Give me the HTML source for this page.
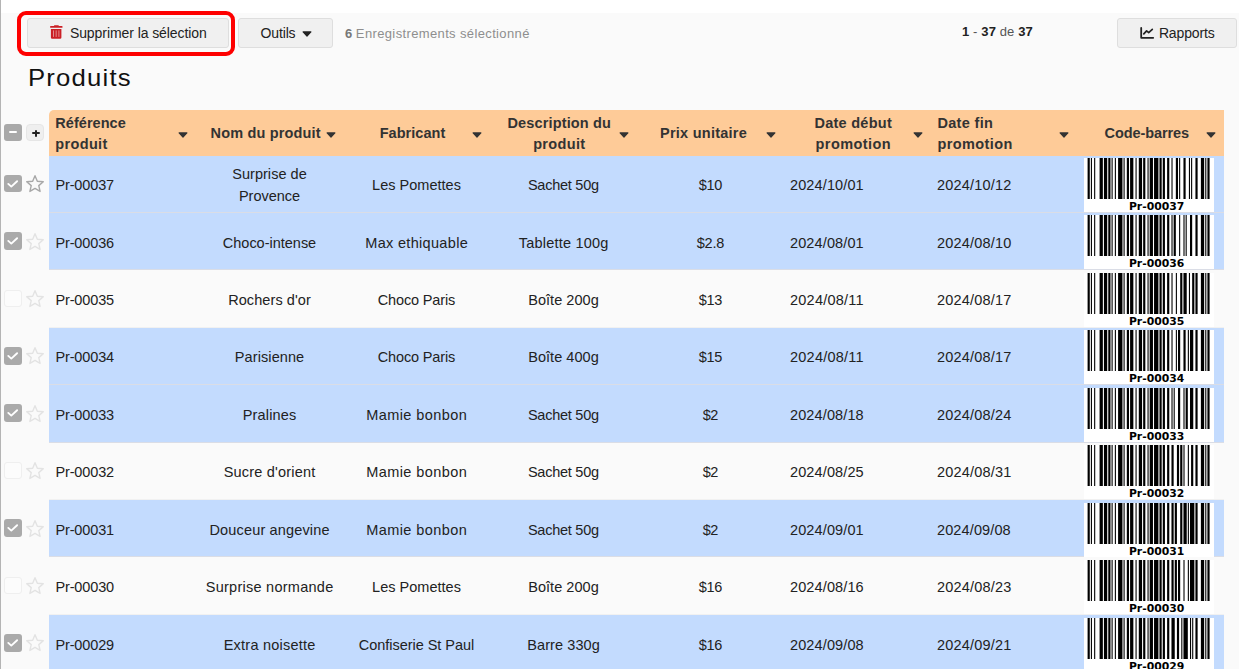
<!DOCTYPE html>
<html lang="fr"><head><meta charset="utf-8"><title>Produits</title>
<style>
*{box-sizing:border-box;margin:0;padding:0}
html,body{width:1239px;height:669px;overflow:hidden}
body{position:relative;background:#fafafa;font-family:"Liberation Sans",sans-serif;font-size:14px;color:#1a1a1a}
.abs{position:absolute}
#topwhite{position:absolute;left:0;top:0;width:1239px;height:13px;background:#fff}
#leftline{position:absolute;left:0;top:0;width:1px;height:669px;background:#b4b4b4}
#redbox{position:absolute;left:17px;top:11px;width:218px;height:45px;border:4px solid #fe0000;border-radius:9px}
.btn{position:absolute;top:18px;height:29.5px;background:#f0f0f0;border:1px solid #dedede;border-radius:3px;color:#222;font-size:14px;line-height:29px;white-space:nowrap}
.btn span{position:absolute;top:0}
#title{position:absolute;left:28px;top:60.3px;font-size:24px;line-height:36px;color:#111;white-space:nowrap}
#selinfo{position:absolute;left:345px;top:24px;font-size:13px;line-height:20px;color:#8e8e8e;white-space:nowrap}
#selinfo b{color:#777}
#pager{position:absolute;left:962px;top:22px;font-size:13px;line-height:20px;color:#555;white-space:nowrap;letter-spacing:.12px}
#pager b{color:#222}
#hdr{position:absolute;left:49px;top:110.3px;width:1175px;height:46.2px;background:#fecb98;border-top-left-radius:5px}
.h{position:absolute;font-weight:bold;font-size:14.5px;line-height:21.2px;color:#333;white-space:nowrap}
.h.ctr{text-align:center;transform:translateX(-50%)}
.car{position:absolute;top:131.6px}
.sq{position:absolute;top:123.8px;width:17.5px;height:17.5px;border-radius:3px}
.row{position:absolute;left:0;width:1239px;height:57.4px}
.row .cells{position:absolute;left:49px;top:0;width:1175px;height:57.4px}
.ln{position:absolute;left:0;top:56.5px;width:1175px;height:1px;background:#f1f1f1}
.row.sel .cells{background:#c3dbfe}
.row.sel .ln{background:#dadde6}
.cb{position:absolute;left:4.3px;top:19.4px;width:17.6px;height:17.6px;border-radius:3px;border:1px solid #efefef;background:#fcfcfc}
.cb.on{background:#aaa;border:none}
.cb svg{position:absolute;left:0;top:0}
.star{position:absolute;left:24.55px;top:18.7px;color:#e3e3e3}
.star.first{color:#a8a8a8}
.tx{position:absolute;left:49px;width:1175px;height:56px}
.c{position:absolute;top:0;height:56px;display:flex;align-items:center;font-size:14.5px;line-height:22px;white-space:nowrap;color:#222}
.c1{left:6.4px}
.c2{left:147px;width:147px;justify-content:center;text-align:center}
.c3{left:294px;width:147px;justify-content:center}
.c4{left:441px;width:147px;justify-content:center}
.c5{left:588px;width:147px;justify-content:center}
.c6{left:741px}
.c7{left:888px}
.bc{position:absolute;left:1035px;top:2.4px}
#title>span{display:inline-block;transform:scaleX(1.07);transform-origin:0 50%}
</style></head>
<body>
<div id="topwhite"></div>
<div id="leftline"></div>
<div id="redbox"></div>
<div class="btn" style="left:27px;width:201.6px">
<svg class="abs" style="left:22px;top:6px" width="13" height="14" viewBox="0 0 13 14"><path d="M4.4.2h4l.7 1h-5.400z" fill="#cb2026"/><rect x=".1" y="1.100" width="12.400" height="1.600" rx=".5" fill="#cb2026"/><path d="M.9 4h10.500v8.500a1.300 1.300 0 0 1-1.300 1.300H2.200a1.300 1.300 0 0 1-1.300-1.300z" fill="#cb2026"/><path d="M3.500 5.400v6.500M6.150 5.400v6.500M8.900 5.400v6.500" stroke="#e18c8c" stroke-width="1"/></svg>
<span style="left:41.900px"><span style="letter-spacing:-0.073px;margin-right:0.073px">Supprimer la sélection</span></span></div>
<div class="btn" style="left:238px;width:94.5px"><span style="left:21.5px"><span style="letter-spacing:-0.137px;margin-right:0.137px">Outils</span></span><svg class="car" style="left:62.500px;top:12px" width="10" height="6" viewBox="0 0 10 6"><path d="M1.100 .9h7.800L5 5z" fill="#222" stroke="#222" stroke-width="1.200" stroke-linejoin="round"/></svg></div>
<div id="selinfo"><b>6</b> <span style="letter-spacing:0.365px;margin-right:-0.365px">Enregistrements sélectionné</span></div>
<div id="pager"><b>1</b> - <b>37</b> de <b>37</b></div>
<div class="btn" style="left:1116.9px;width:120px">
<svg class="abs" style="left:22px;top:8px" width="15" height="13" viewBox="0 0 15 13"><path d="M1.200 .9v9.900h12" fill="none" stroke="#222" stroke-width="1.800" stroke-linecap="round" stroke-linejoin="round"/><path d="M3.800 6.900l2.800-3 2.100 1.700 3.600-3.300" fill="none" stroke="#222" stroke-width="1.700" stroke-linecap="round" stroke-linejoin="round"/></svg>
<span style="left:41px"><span style="letter-spacing:-0.144px;margin-right:0.144px">Rapports</span></span></div>
<div id="title"><span style="letter-spacing:1.13px;margin-right:-1.13px">Produits</span></div>
<div id="hdr"></div>
<div class="sq" style="left:4.3px;background:#a9a9a9"><i class="abs" style="left:5.100px;top:7.700px;width:7.600px;height:1.500px;background:#fff;border-radius:1px"></i></div>
<div class="sq" style="left:26.2px;background:#efefef;border:1px solid #e6e6e6;border-radius:4px"><i class="abs" style="left:4.700px;top:7.600px;width:8.100px;height:1.500px;background:#222;border-radius:1px"></i><i class="abs" style="left:8px;top:5px;width:1.500px;height:6.900px;background:#222;border-radius:1px"></i></div>
<div class="h" style="left:55.300px;top:112.9px"><span style="letter-spacing:0.043px;margin-right:-0.043px">Référence</span><br><span style="letter-spacing:0.35px;margin-right:-0.35px">produit</span></div><svg class="car" style="left:177.500px" width="10" height="6" viewBox="0 0 10 6"><path d="M1.100 .9h7.800L5 5z" fill="#333" stroke="#333" stroke-width="1.200" stroke-linejoin="round"/></svg>
<div class="h ctr" style="left:265.600px;top:122.5px"><span style="letter-spacing:0.17px;margin-right:-0.17px">Nom du produit</span></div><svg class="car" style="left:325.500px" width="10" height="6" viewBox="0 0 10 6"><path d="M1.100 .9h7.800L5 5z" fill="#333" stroke="#333" stroke-width="1.200" stroke-linejoin="round"/></svg>
<div class="h ctr" style="left:412.500px;top:122.5px"><span style="letter-spacing:0.058px;margin-right:-0.058px">Fabricant</span></div><svg class="car" style="left:472.200px" width="10" height="6" viewBox="0 0 10 6"><path d="M1.100 .9h7.800L5 5z" fill="#333" stroke="#333" stroke-width="1.200" stroke-linejoin="round"/></svg>
<div class="h ctr" style="left:559.200px;top:112.9px"><span style="letter-spacing:0.142px;margin-right:-0.142px">Description du</span><br><span style="letter-spacing:0.35px;margin-right:-0.35px">produit</span></div><svg class="car" style="left:619.400px" width="10" height="6" viewBox="0 0 10 6"><path d="M1.100 .9h7.800L5 5z" fill="#333" stroke="#333" stroke-width="1.200" stroke-linejoin="round"/></svg>
<div class="h ctr" style="left:703.400px;top:122.5px"><span style="letter-spacing:0.255px;margin-right:-0.255px">Prix unitaire</span></div><svg class="car" style="left:765.900px" width="10" height="6" viewBox="0 0 10 6"><path d="M1.100 .9h7.800L5 5z" fill="#333" stroke="#333" stroke-width="1.200" stroke-linejoin="round"/></svg>
<div class="h ctr" style="left:853.100px;top:112.9px"><span style="letter-spacing:0.267px;margin-right:-0.267px">Date début</span><br><span style="letter-spacing:0.41px;margin-right:-0.41px">promotion</span></div><svg class="car" style="left:912.700px" width="10" height="6" viewBox="0 0 10 6"><path d="M1.100 .9h7.800L5 5z" fill="#333" stroke="#333" stroke-width="1.200" stroke-linejoin="round"/></svg>
<div class="h" style="left:937.400px;top:112.9px"><span style="letter-spacing:0.341px;margin-right:-0.341px">Date fin</span><br><span style="letter-spacing:0.41px;margin-right:-0.41px">promotion</span></div><svg class="car" style="left:1059px" width="10" height="6" viewBox="0 0 10 6"><path d="M1.100 .9h7.800L5 5z" fill="#333" stroke="#333" stroke-width="1.200" stroke-linejoin="round"/></svg>
<div class="h ctr" style="left:1146.800px;top:122.5px"><span style="letter-spacing:-0.105px;margin-right:0.105px">Code-barres</span></div><svg class="car" style="left:1206.200px" width="10" height="6" viewBox="0 0 10 6"><path d="M1.100 .9h7.800L5 5z" fill="#333" stroke="#333" stroke-width="1.200" stroke-linejoin="round"/></svg>
<div class="row sel" style="top:155.5px"><span class="cb on"><svg viewBox="0 0 17.600 17.600" width="17.600" height="17.600"><path d="M4.300 8.900l3 2.700 5.800-5.400" fill="none" stroke="#fff" stroke-width="1.900" stroke-linecap="round" stroke-linejoin="round"/></svg></span><svg class="star first" viewBox="0 0 20 20" width="20" height="20"><path d="M10.00 1.70L12.32 7.20L18.27 7.71L13.76 11.62L15.11 17.44L10.00 14.35L4.89 17.44L6.24 11.62L1.73 7.71L7.68 7.20z" fill="none" stroke="currentColor" stroke-width="1.400" stroke-linejoin="round"/></svg><div class="cells" style="height:58px"><i class="ln"></i><svg class="bc" style="top:2.30px" width="130" height="54" viewBox="0 0 130 54"><rect width="130" height="54" fill="#fff"/><g transform="translate(3.6 0) scale(1.0893 1)"><path d="M0 0h2v41h-2zM3 0h1v41h-1zM6 0h1v41h-1zM11 0h3v41h-3zM15 0h3v41h-3zM19 0h2v41h-2zM22 0h1v41h-1zM25 0h1v41h-1zM28 0h4v41h-4zM33 0h1v41h-1zM36 0h2v41h-2zM39 0h3v41h-3zM44 0h1v41h-1zM47 0h3v41h-3zM51 0h2v41h-2zM55 0h1v41h-1zM57 0h3v41h-3zM61 0h4v41h-4zM66 0h2v41h-2zM69 0h2v41h-2zM73 0h2v41h-2zM77 0h1v41h-1zM81 0h2v41h-2zM84 0h1v41h-1zM88 0h2v41h-2zM93 0h1v41h-1zM95 0h1v41h-1zM99 0h2v41h-2zM104 0h3v41h-3zM108 0h1v41h-1zM110 0h2v41h-2z" fill="#000"/></g><text transform="translate(72.6 52) scale(1.083 1)" text-anchor="middle" font-family="'DejaVu Sans','Liberation Sans',sans-serif" font-weight="bold" font-size="10">Pr-00037</text></svg></div></div>
<div class="tx" style="top:157px"><div class="c c1"><span style="letter-spacing:-0.126px;margin-right:0.126px">Pr-00037</span></div><div class="c c2"><div><span style="letter-spacing:0.041px;margin-right:-0.041px">Surprise de</span><br><span style="letter-spacing:-0.013px;margin-right:0.013px">Provence</span></div></div><div class="c c3"><span style="letter-spacing:0.018px;margin-right:-0.018px">Les Pomettes</span></div><div class="c c4"><span style="letter-spacing:-0.244px;margin-right:0.244px">Sachet 50g</span></div><div class="c c5"><span style="letter-spacing:-0.314px;margin-right:0.314px">$10</span></div><div class="c c6"><span style="letter-spacing:0.121px;margin-right:-0.121px">2024/10/01</span></div><div class="c c7"><span style="letter-spacing:0.188px;margin-right:-0.188px">2024/10/12</span></div></div>
<div class="row sel" style="top:212.9px"><span class="cb on"><svg viewBox="0 0 17.600 17.600" width="17.600" height="17.600"><path d="M4.300 8.900l3 2.700 5.800-5.400" fill="none" stroke="#fff" stroke-width="1.900" stroke-linecap="round" stroke-linejoin="round"/></svg></span><svg class="star" viewBox="0 0 20 20" width="20" height="20"><path d="M10.00 1.70L12.32 7.20L18.27 7.71L13.76 11.62L15.11 17.44L10.00 14.35L4.89 17.44L6.24 11.62L1.73 7.71L7.68 7.20z" fill="none" stroke="currentColor" stroke-width="1.400" stroke-linejoin="round"/></svg><div class="cells"><i class="ln"></i><svg class="bc" style="top:2.38px" width="130" height="54" viewBox="0 0 130 54"><rect width="130" height="54" fill="#fff"/><g transform="translate(3.6 0) scale(1.0893 1)"><path d="M0 0h2v41h-2zM3 0h1v41h-1zM6 0h1v41h-1zM11 0h3v41h-3zM15 0h3v41h-3zM19 0h2v41h-2zM22 0h1v41h-1zM25 0h1v41h-1zM28 0h4v41h-4zM33 0h1v41h-1zM36 0h2v41h-2zM39 0h3v41h-3zM44 0h1v41h-1zM47 0h3v41h-3zM51 0h2v41h-2zM55 0h1v41h-1zM57 0h3v41h-3zM61 0h4v41h-4zM66 0h2v41h-2zM69 0h2v41h-2zM73 0h2v41h-2zM77 0h1v41h-1zM79 0h2v41h-2zM84 0h1v41h-1zM88 0h1v41h-1zM90 0h1v41h-1zM94 0h2v41h-2zM99 0h2v41h-2zM104 0h3v41h-3zM108 0h1v41h-1zM110 0h2v41h-2z" fill="#000"/></g><text transform="translate(72.6 52) scale(1.083 1)" text-anchor="middle" font-family="'DejaVu Sans','Liberation Sans',sans-serif" font-weight="bold" font-size="10">Pr-00036</text></svg></div></div>
<div class="tx" style="top:215px"><div class="c c1"><span style="letter-spacing:-0.126px;margin-right:0.126px">Pr-00036</span></div><div class="c c2"><div><span style="letter-spacing:-0.011px;margin-right:0.011px">Choco-intense</span></div></div><div class="c c3"><span style="letter-spacing:0.317px;margin-right:-0.317px">Max ethiquable</span></div><div class="c c4"><span style="letter-spacing:0.208px;margin-right:-0.208px">Tablette 100g</span></div><div class="c c5"><span style="letter-spacing:-0.252px;margin-right:0.252px">$2.8</span></div><div class="c c6"><span style="letter-spacing:0.121px;margin-right:-0.121px">2024/08/01</span></div><div class="c c7"><span style="letter-spacing:0.188px;margin-right:-0.188px">2024/08/10</span></div></div>
<div class="row" style="top:270.3px"><span class="cb"></span><svg class="star" viewBox="0 0 20 20" width="20" height="20"><path d="M10.00 1.70L12.32 7.20L18.27 7.71L13.76 11.62L15.11 17.44L10.00 14.35L4.89 17.44L6.24 11.62L1.73 7.71L7.68 7.20z" fill="none" stroke="currentColor" stroke-width="1.400" stroke-linejoin="round"/></svg><div class="cells"><i class="ln"></i><svg class="bc" style="top:2.45px" width="130" height="54" viewBox="0 0 130 54"><rect width="130" height="54" fill="#fff"/><g transform="translate(3.6 0) scale(1.0893 1)"><path d="M0 0h2v41h-2zM3 0h1v41h-1zM6 0h1v41h-1zM11 0h3v41h-3zM15 0h3v41h-3zM19 0h2v41h-2zM22 0h1v41h-1zM25 0h1v41h-1zM28 0h4v41h-4zM33 0h1v41h-1zM36 0h2v41h-2zM39 0h3v41h-3zM44 0h1v41h-1zM47 0h3v41h-3zM51 0h2v41h-2zM55 0h1v41h-1zM57 0h3v41h-3zM61 0h4v41h-4zM66 0h2v41h-2zM69 0h2v41h-2zM73 0h2v41h-2zM77 0h1v41h-1zM81 0h1v41h-1zM85 0h2v41h-2zM88 0h3v41h-3zM93 0h1v41h-1zM96 0h2v41h-2zM99 0h2v41h-2zM104 0h3v41h-3zM108 0h1v41h-1zM110 0h2v41h-2z" fill="#000"/></g><text transform="translate(72.6 52) scale(1.083 1)" text-anchor="middle" font-family="'DejaVu Sans','Liberation Sans',sans-serif" font-weight="bold" font-size="10">Pr-00035</text></svg></div></div>
<div class="tx" style="top:272px"><div class="c c1"><span style="letter-spacing:-0.126px;margin-right:0.126px">Pr-00035</span></div><div class="c c2"><div><span style="letter-spacing:0.08px;margin-right:-0.08px">Rochers d'or</span></div></div><div class="c c3"><span style="letter-spacing:-0.153px;margin-right:0.153px">Choco Paris</span></div><div class="c c4"><span style="letter-spacing:0.036px;margin-right:-0.036px">Boîte 200g</span></div><div class="c c5"><span style="letter-spacing:-0.314px;margin-right:0.314px">$13</span></div><div class="c c6"><span style="letter-spacing:0.241px;margin-right:-0.241px">2024/08/11</span></div><div class="c c7"><span style="letter-spacing:0.188px;margin-right:-0.188px">2024/08/17</span></div></div>
<div class="row sel" style="top:327.7px"><span class="cb on"><svg viewBox="0 0 17.600 17.600" width="17.600" height="17.600"><path d="M4.300 8.900l3 2.700 5.800-5.400" fill="none" stroke="#fff" stroke-width="1.900" stroke-linecap="round" stroke-linejoin="round"/></svg></span><svg class="star" viewBox="0 0 20 20" width="20" height="20"><path d="M10.00 1.70L12.32 7.20L18.27 7.71L13.76 11.62L15.11 17.44L10.00 14.35L4.89 17.44L6.24 11.62L1.73 7.71L7.68 7.20z" fill="none" stroke="currentColor" stroke-width="1.400" stroke-linejoin="round"/></svg><div class="cells" style="height:58px"><i class="ln"></i><svg class="bc" style="top:2.52px" width="130" height="54" viewBox="0 0 130 54"><rect width="130" height="54" fill="#fff"/><g transform="translate(3.6 0) scale(1.0893 1)"><path d="M0 0h2v41h-2zM3 0h1v41h-1zM6 0h1v41h-1zM11 0h3v41h-3zM15 0h3v41h-3zM19 0h2v41h-2zM22 0h1v41h-1zM25 0h1v41h-1zM28 0h4v41h-4zM33 0h1v41h-1zM36 0h2v41h-2zM39 0h3v41h-3zM44 0h1v41h-1zM47 0h3v41h-3zM51 0h2v41h-2zM55 0h1v41h-1zM57 0h3v41h-3zM61 0h4v41h-4zM66 0h2v41h-2zM69 0h2v41h-2zM73 0h2v41h-2zM77 0h1v41h-1zM81 0h1v41h-1zM83 0h2v41h-2zM88 0h2v41h-2zM92 0h1v41h-1zM94 0h3v41h-3zM99 0h2v41h-2zM104 0h3v41h-3zM108 0h1v41h-1zM110 0h2v41h-2z" fill="#000"/></g><text transform="translate(72.6 52) scale(1.083 1)" text-anchor="middle" font-family="'DejaVu Sans','Liberation Sans',sans-serif" font-weight="bold" font-size="10">Pr-00034</text></svg></div></div>
<div class="tx" style="top:329px"><div class="c c1"><span style="letter-spacing:-0.126px;margin-right:0.126px">Pr-00034</span></div><div class="c c2"><div><span style="letter-spacing:0.094px;margin-right:-0.094px">Parisienne</span></div></div><div class="c c3"><span style="letter-spacing:-0.153px;margin-right:0.153px">Choco Paris</span></div><div class="c c4"><span style="letter-spacing:0.036px;margin-right:-0.036px">Boîte 400g</span></div><div class="c c5"><span style="letter-spacing:-0.314px;margin-right:0.314px">$15</span></div><div class="c c6"><span style="letter-spacing:0.241px;margin-right:-0.241px">2024/08/11</span></div><div class="c c7"><span style="letter-spacing:0.188px;margin-right:-0.188px">2024/08/17</span></div></div>
<div class="row sel" style="top:385.1px"><span class="cb on"><svg viewBox="0 0 17.600 17.600" width="17.600" height="17.600"><path d="M4.300 8.900l3 2.700 5.800-5.400" fill="none" stroke="#fff" stroke-width="1.900" stroke-linecap="round" stroke-linejoin="round"/></svg></span><svg class="star" viewBox="0 0 20 20" width="20" height="20"><path d="M10.00 1.70L12.32 7.20L18.27 7.71L13.76 11.62L15.11 17.44L10.00 14.35L4.89 17.44L6.24 11.62L1.73 7.71L7.68 7.20z" fill="none" stroke="currentColor" stroke-width="1.400" stroke-linejoin="round"/></svg><div class="cells"><i class="ln"></i><svg class="bc" style="top:2.60px" width="130" height="54" viewBox="0 0 130 54"><rect width="130" height="54" fill="#fff"/><g transform="translate(3.6 0) scale(1.0893 1)"><path d="M0 0h2v41h-2zM3 0h1v41h-1zM6 0h1v41h-1zM11 0h3v41h-3zM15 0h3v41h-3zM19 0h2v41h-2zM22 0h1v41h-1zM25 0h1v41h-1zM28 0h4v41h-4zM33 0h1v41h-1zM36 0h2v41h-2zM39 0h3v41h-3zM44 0h1v41h-1zM47 0h3v41h-3zM51 0h2v41h-2zM55 0h1v41h-1zM57 0h3v41h-3zM61 0h4v41h-4zM66 0h2v41h-2zM69 0h2v41h-2zM73 0h2v41h-2zM77 0h1v41h-1zM79 0h1v41h-1zM83 0h2v41h-2zM88 0h1v41h-1zM90 0h2v41h-2zM94 0h3v41h-3zM99 0h2v41h-2zM104 0h3v41h-3zM108 0h1v41h-1zM110 0h2v41h-2z" fill="#000"/></g><text transform="translate(72.6 52) scale(1.083 1)" text-anchor="middle" font-family="'DejaVu Sans','Liberation Sans',sans-serif" font-weight="bold" font-size="10">Pr-00033</text></svg></div></div>
<div class="tx" style="top:387px"><div class="c c1"><span style="letter-spacing:-0.126px;margin-right:0.126px">Pr-00033</span></div><div class="c c2"><div><span style="letter-spacing:0.138px;margin-right:-0.138px">Pralines</span></div></div><div class="c c3"><span style="letter-spacing:0.413px;margin-right:-0.413px">Mamie bonbon</span></div><div class="c c4"><span style="letter-spacing:-0.244px;margin-right:0.244px">Sachet 50g</span></div><div class="c c5"><span style="letter-spacing:-0.664px;margin-right:0.664px">$2</span></div><div class="c c6"><span style="letter-spacing:0.121px;margin-right:-0.121px">2024/08/18</span></div><div class="c c7"><span style="letter-spacing:0.188px;margin-right:-0.188px">2024/08/24</span></div></div>
<div class="row" style="top:442.5px"><span class="cb"></span><svg class="star" viewBox="0 0 20 20" width="20" height="20"><path d="M10.00 1.70L12.32 7.20L18.27 7.71L13.76 11.62L15.11 17.44L10.00 14.35L4.89 17.44L6.24 11.62L1.73 7.71L7.68 7.20z" fill="none" stroke="currentColor" stroke-width="1.400" stroke-linejoin="round"/></svg><div class="cells"><i class="ln"></i><svg class="bc" style="top:2.67px" width="130" height="54" viewBox="0 0 130 54"><rect width="130" height="54" fill="#fff"/><g transform="translate(3.6 0) scale(1.0893 1)"><path d="M0 0h2v41h-2zM3 0h1v41h-1zM6 0h1v41h-1zM11 0h3v41h-3zM15 0h3v41h-3zM19 0h2v41h-2zM22 0h1v41h-1zM25 0h1v41h-1zM28 0h4v41h-4zM33 0h1v41h-1zM36 0h2v41h-2zM39 0h3v41h-3zM44 0h1v41h-1zM47 0h3v41h-3zM51 0h2v41h-2zM55 0h1v41h-1zM57 0h3v41h-3zM61 0h4v41h-4zM66 0h2v41h-2zM69 0h2v41h-2zM73 0h2v41h-2zM77 0h2v41h-2zM82 0h2v41h-2zM85 0h2v41h-2zM88 0h1v41h-1zM92 0h1v41h-1zM95 0h2v41h-2zM99 0h2v41h-2zM104 0h3v41h-3zM108 0h1v41h-1zM110 0h2v41h-2z" fill="#000"/></g><text transform="translate(72.6 52) scale(1.083 1)" text-anchor="middle" font-family="'DejaVu Sans','Liberation Sans',sans-serif" font-weight="bold" font-size="10">Pr-00032</text></svg></div></div>
<div class="tx" style="top:444px"><div class="c c1"><span style="letter-spacing:-0.126px;margin-right:0.126px">Pr-00032</span></div><div class="c c2"><div><span style="letter-spacing:0.194px;margin-right:-0.194px">Sucre d'orient</span></div></div><div class="c c3"><span style="letter-spacing:0.413px;margin-right:-0.413px">Mamie bonbon</span></div><div class="c c4"><span style="letter-spacing:-0.244px;margin-right:0.244px">Sachet 50g</span></div><div class="c c5"><span style="letter-spacing:-0.664px;margin-right:0.664px">$2</span></div><div class="c c6"><span style="letter-spacing:0.121px;margin-right:-0.121px">2024/08/25</span></div><div class="c c7"><span style="letter-spacing:0.188px;margin-right:-0.188px">2024/08/31</span></div></div>
<div class="row sel" style="top:499.9px"><span class="cb on"><svg viewBox="0 0 17.600 17.600" width="17.600" height="17.600"><path d="M4.300 8.900l3 2.700 5.800-5.400" fill="none" stroke="#fff" stroke-width="1.900" stroke-linecap="round" stroke-linejoin="round"/></svg></span><svg class="star" viewBox="0 0 20 20" width="20" height="20"><path d="M10.00 1.70L12.32 7.20L18.27 7.71L13.76 11.62L15.11 17.44L10.00 14.35L4.89 17.44L6.24 11.62L1.73 7.71L7.68 7.20z" fill="none" stroke="currentColor" stroke-width="1.400" stroke-linejoin="round"/></svg><div class="cells"><i class="ln"></i><svg class="bc" style="top:2.75px" width="130" height="54" viewBox="0 0 130 54"><rect width="130" height="54" fill="#fff"/><g transform="translate(3.6 0) scale(1.0893 1)"><path d="M0 0h2v41h-2zM3 0h1v41h-1zM6 0h1v41h-1zM11 0h3v41h-3zM15 0h3v41h-3zM19 0h2v41h-2zM22 0h1v41h-1zM25 0h1v41h-1zM28 0h4v41h-4zM33 0h1v41h-1zM36 0h2v41h-2zM39 0h3v41h-3zM44 0h1v41h-1zM47 0h3v41h-3zM51 0h2v41h-2zM55 0h1v41h-1zM57 0h3v41h-3zM61 0h4v41h-4zM66 0h2v41h-2zM69 0h2v41h-2zM73 0h2v41h-2zM77 0h2v41h-2zM80 0h2v41h-2zM85 0h2v41h-2zM88 0h3v41h-3zM92 0h1v41h-1zM94 0h4v41h-4zM99 0h2v41h-2zM104 0h3v41h-3zM108 0h1v41h-1zM110 0h2v41h-2z" fill="#000"/></g><text transform="translate(72.6 52) scale(1.083 1)" text-anchor="middle" font-family="'DejaVu Sans','Liberation Sans',sans-serif" font-weight="bold" font-size="10">Pr-00031</text></svg></div></div>
<div class="tx" style="top:502px"><div class="c c1"><span style="letter-spacing:-0.126px;margin-right:0.126px">Pr-00031</span></div><div class="c c2"><div><span style="letter-spacing:0.158px;margin-right:-0.158px">Douceur angevine</span></div></div><div class="c c3"><span style="letter-spacing:0.413px;margin-right:-0.413px">Mamie bonbon</span></div><div class="c c4"><span style="letter-spacing:-0.244px;margin-right:0.244px">Sachet 50g</span></div><div class="c c5"><span style="letter-spacing:-0.664px;margin-right:0.664px">$2</span></div><div class="c c6"><span style="letter-spacing:0.121px;margin-right:-0.121px">2024/09/01</span></div><div class="c c7"><span style="letter-spacing:0.121px;margin-right:-0.121px">2024/09/08</span></div></div>
<div class="row" style="top:557.3px"><span class="cb"></span><svg class="star" viewBox="0 0 20 20" width="20" height="20"><path d="M10.00 1.70L12.32 7.20L18.27 7.71L13.76 11.62L15.11 17.44L10.00 14.35L4.89 17.44L6.24 11.62L1.73 7.71L7.68 7.20z" fill="none" stroke="currentColor" stroke-width="1.400" stroke-linejoin="round"/></svg><div class="cells"><i class="ln"></i><svg class="bc" style="top:2.82px" width="130" height="54" viewBox="0 0 130 54"><rect width="130" height="54" fill="#fff"/><g transform="translate(3.6 0) scale(1.0893 1)"><path d="M0 0h2v41h-2zM3 0h1v41h-1zM6 0h1v41h-1zM11 0h3v41h-3zM15 0h3v41h-3zM19 0h2v41h-2zM22 0h1v41h-1zM25 0h1v41h-1zM28 0h4v41h-4zM33 0h1v41h-1zM36 0h2v41h-2zM39 0h3v41h-3zM44 0h1v41h-1zM47 0h3v41h-3zM51 0h2v41h-2zM55 0h1v41h-1zM57 0h3v41h-3zM61 0h4v41h-4zM66 0h2v41h-2zM69 0h2v41h-2zM73 0h2v41h-2zM77 0h2v41h-2zM80 0h2v41h-2zM83 0h2v41h-2zM88 0h1v41h-1zM92 0h1v41h-1zM94 0h4v41h-4zM99 0h2v41h-2zM104 0h3v41h-3zM108 0h1v41h-1zM110 0h2v41h-2z" fill="#000"/></g><text transform="translate(72.6 52) scale(1.083 1)" text-anchor="middle" font-family="'DejaVu Sans','Liberation Sans',sans-serif" font-weight="bold" font-size="10">Pr-00030</text></svg></div></div>
<div class="tx" style="top:559px"><div class="c c1"><span style="letter-spacing:-0.126px;margin-right:0.126px">Pr-00030</span></div><div class="c c2"><div><span style="letter-spacing:0.259px;margin-right:-0.259px">Surprise normande</span></div></div><div class="c c3"><span style="letter-spacing:0.018px;margin-right:-0.018px">Les Pomettes</span></div><div class="c c4"><span style="letter-spacing:0.036px;margin-right:-0.036px">Boîte 200g</span></div><div class="c c5"><span style="letter-spacing:-0.314px;margin-right:0.314px">$16</span></div><div class="c c6"><span style="letter-spacing:0.121px;margin-right:-0.121px">2024/08/16</span></div><div class="c c7"><span style="letter-spacing:0.188px;margin-right:-0.188px">2024/08/23</span></div></div>
<div class="row sel" style="top:614.7px"><span class="cb on"><svg viewBox="0 0 17.600 17.600" width="17.600" height="17.600"><path d="M4.300 8.900l3 2.700 5.800-5.400" fill="none" stroke="#fff" stroke-width="1.900" stroke-linecap="round" stroke-linejoin="round"/></svg></span><svg class="star" viewBox="0 0 20 20" width="20" height="20"><path d="M10.00 1.70L12.32 7.20L18.27 7.71L13.76 11.62L15.11 17.44L10.00 14.35L4.89 17.44L6.24 11.62L1.73 7.71L7.68 7.20z" fill="none" stroke="currentColor" stroke-width="1.400" stroke-linejoin="round"/></svg><div class="cells"><i class="ln"></i><svg class="bc" style="top:2.90px" width="130" height="54" viewBox="0 0 130 54"><rect width="130" height="54" fill="#fff"/><g transform="translate(3.6 0) scale(1.0893 1)"><path d="M0 0h2v41h-2zM3 0h1v41h-1zM6 0h1v41h-1zM11 0h3v41h-3zM15 0h3v41h-3zM19 0h2v41h-2zM22 0h1v41h-1zM25 0h1v41h-1zM28 0h4v41h-4zM33 0h1v41h-1zM36 0h2v41h-2zM39 0h3v41h-3zM44 0h1v41h-1zM47 0h3v41h-3zM51 0h2v41h-2zM55 0h1v41h-1zM57 0h3v41h-3zM61 0h4v41h-4zM66 0h2v41h-2zM69 0h2v41h-2zM73 0h2v41h-2zM77 0h3v41h-3zM82 0h2v41h-2zM86 0h1v41h-1zM88 0h4v41h-4zM94 0h1v41h-1zM96 0h1v41h-1zM99 0h2v41h-2zM104 0h3v41h-3zM108 0h1v41h-1zM110 0h2v41h-2z" fill="#000"/></g><text transform="translate(72.6 52) scale(1.083 1)" text-anchor="middle" font-family="'DejaVu Sans','Liberation Sans',sans-serif" font-weight="bold" font-size="10">Pr-00029</text></svg></div></div>
<div class="tx" style="top:617px"><div class="c c1"><span style="letter-spacing:-0.126px;margin-right:0.126px">Pr-00029</span></div><div class="c c2"><div><span style="letter-spacing:0.224px;margin-right:-0.224px">Extra noisette</span></div></div><div class="c c3"><span style="letter-spacing:-0.043px;margin-right:0.043px">Confiserie St Paul</span></div><div class="c c4"><span style="letter-spacing:0.08px;margin-right:-0.08px">Barre 330g</span></div><div class="c c5"><span style="letter-spacing:-0.314px;margin-right:0.314px">$16</span></div><div class="c c6"><span style="letter-spacing:0.121px;margin-right:-0.121px">2024/09/08</span></div><div class="c c7"><span style="letter-spacing:0.188px;margin-right:-0.188px">2024/09/21</span></div></div>
</body></html>
